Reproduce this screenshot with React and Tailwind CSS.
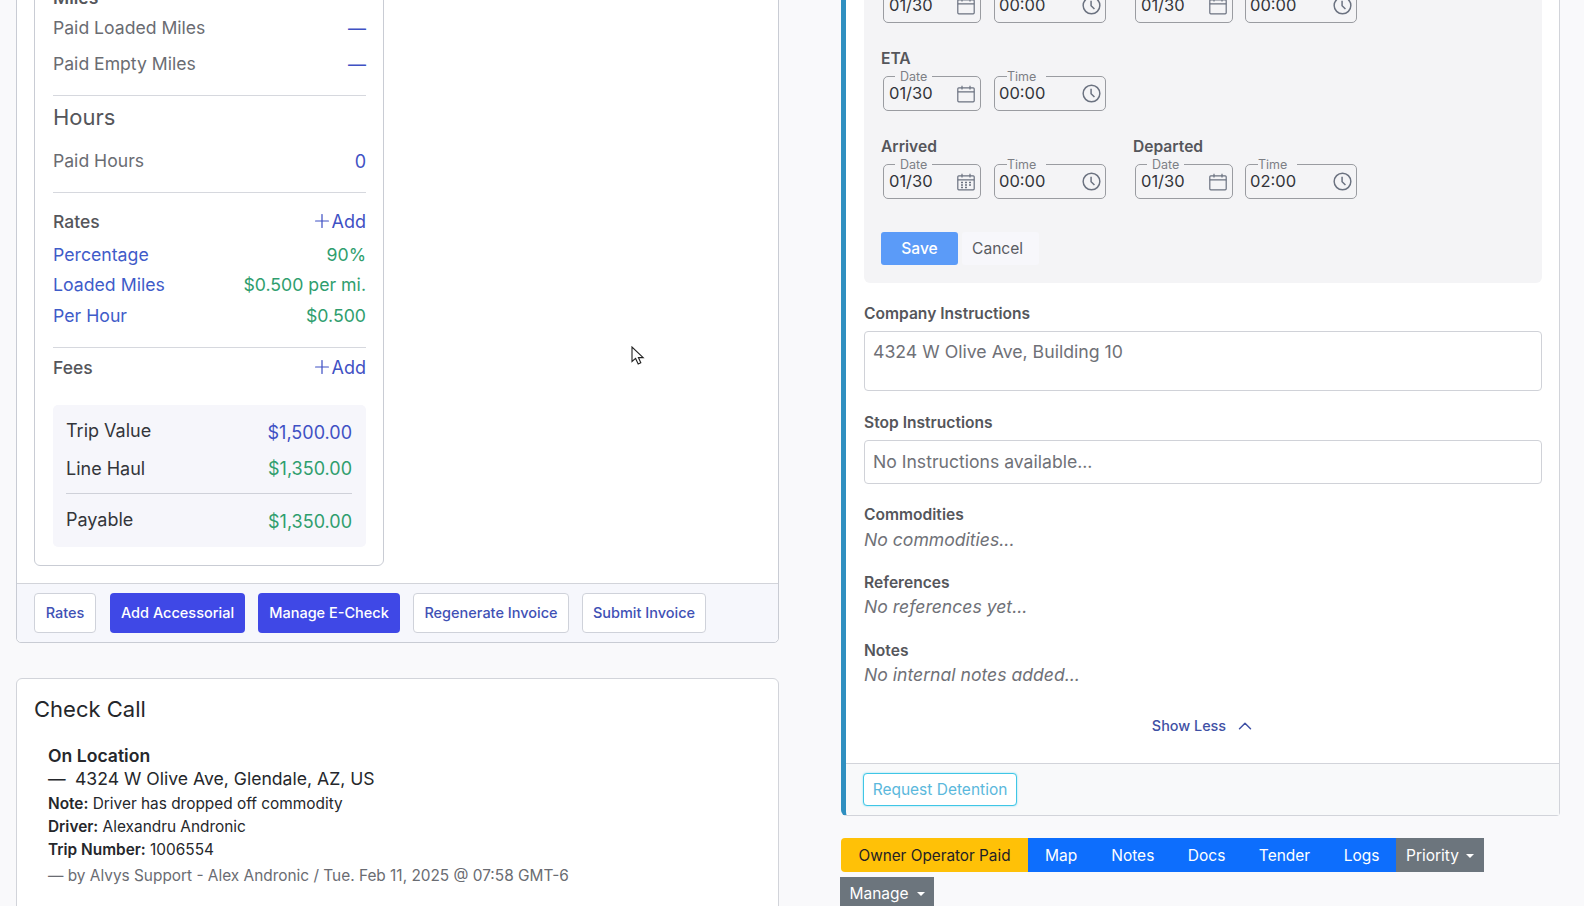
import React from 'react';
import { ChevronUp, Plus } from 'lucide-react';

const CalendarIcon = ({ dots }) => (
  <svg width="18" height="18" viewBox="0 0 18 18" fill="none" stroke="#6b7280" strokeWidth="1.2" className="shrink-0">
    <rect x="0.8" y="2.8" width="16.4" height="14" rx="1" />
    <path d="M0.8 6.8H17.2M5 0.8V4.4M13 0.8V4.4" />
    {dots && <path d="M4 9.5h2M8 9.5h2M12 9.5h2M4 12h2M8 12h2M12 12h2M4 14.5h2M8 14.5h2" strokeWidth="1.4" />}
  </svg>
);

const ClockIcon = () => (
  <svg width="19" height="19" viewBox="0 0 18 18" fill="none" stroke="#6b7280" strokeWidth="1.4" className="shrink-0">
    <circle cx="9" cy="9" r="7.9" />
    <path d="M8.6 4.4V9.2L11.8 12.4" />
  </svg>
);

const DateField = ({ label, value, dots, time }) => (
  <div className={`relative flex items-center justify-between h-[35px] border border-[#9a9ca1] rounded-[5px] ${time ? 'w-[112px] pl-[4px] pr-[4px]' : 'w-[98px] pl-[5px] pr-[5px]'}`}>
    <span className={`absolute -top-[8px] bg-[#f4f4f6] text-[12.5px] leading-[16px] text-[#7d7f85] ${time ? 'left-[12px] pr-[10px]' : 'left-[11px] px-[5px]'}`}>{label}</span>
    <span className="text-[16.5px] text-[#33353a]">{value}</span>
    {time ? <ClockIcon /> : <CalendarIcon dots={dots} />}
  </div>
);

const Stop = ({ title, date, time, dots, gap }) => (
  <div>
    {title && <div className="text-[15.6px] font-semibold leading-[18px] text-[#55565b] -ml-[2px] mb-[1px]">{title}</div>}
    <div className={`flex ${title ? 'mt-[8px]' : 'mt-[3px]'} ${gap ? 'gap-[12px]' : 'gap-[13px]'}`}>
      <DateField label="Date" value={date} dots={dots} />
      <DateField label="Time" value={time} time />
    </div>
  </div>
);

const Row = ({ label, value, labelClass, valueClass, className }) => (
  <div className={`flex items-center justify-between ${className}`}>
    <span className={labelClass}>{label}</span>
    <span className={valueClass}>{value}</span>
  </div>
);

const AddLink = () => (
  <span className="flex items-center text-[18px] text-[#3f51c4] -mt-[2px]">
    <Plus size={22} strokeWidth={1.35} className="-mr-[1px]" />
    Add
  </span>
);

const OutlineButton = ({ children, className }) => (
  <button className={`h-[40px] bg-white border border-[#cfd2da] rounded-[4px] text-[14.5px] font-medium text-[#3f51b5] ${className}`}>{children}</button>
);

const SolidButton = ({ children, className }) => (
  <button className={`h-[40px] bg-[#3f48e6] rounded-[4px] text-[14.5px] font-medium text-white ${className}`}>{children}</button>
);

const Cursor = () => (
  <svg width="14" height="20" viewBox="0 0 14 20" fill="white" stroke="#222" strokeWidth="1.1" className="absolute left-[631px] top-[346px]">
    <path d="M1 1V15.5L4.6 12.4L7.2 18L9.8 16.8L7.4 11.6H12.2Z" />
  </svg>
);

const sectionLabel = 'text-[15.6px] font-semibold leading-[18px] text-[#55565b]';
const emptyText = 'text-[17.6px] italic leading-[24px] text-[#6f7177]';

export default function App() {
  return (
    <div className="relative h-[906px] overflow-hidden bg-[#f9f9fb] flex font-['Inter',sans-serif]">
      {/* left column */}
      <div className="ml-[16px] w-[763px] shrink-0 -mt-[14px]">
        <div className="bg-white border border-[#c9ccd4] rounded-b-[5px] rounded-t-none">
          <div className="pl-[17px]">
            <div className="w-[350px] border border-[#c9ccd4] rounded-[6px] pl-[18px] pr-[17px] pt-[5px] pb-[18px]">
              <div className="h-[10px] text-[17.5px] font-semibold leading-[10px] text-[#55565b]">Miles</div>
              <Row className="mt-[7px] h-[36px]" label="Paid Loaded Miles" value="—" labelClass="text-[17.6px] text-[#6a6c72]" valueClass="text-[18px] text-[#3f51c4]" />
              <Row className="h-[36px]" label="Paid Empty Miles" value="—" labelClass="text-[17.6px] text-[#6a6c72]" valueClass="text-[18px] text-[#3f51c4]" />
              <div className="mt-[13px] border-t border-[#d6d8de]" />
              <div className="mt-[6px] text-[22px] leading-[30px] text-[#55565b]">Hours</div>
              <Row className="mt-[15px] h-[28px]" label="Paid Hours" value="0" labelClass="text-[17.6px] text-[#6a6c72]" valueClass="text-[18px] text-[#3f51c4]" />
              <div className="mt-[17px] border-t border-[#d6d8de]" />
              <Row className="mt-[15px] h-[28px]" label="Rates" value={<AddLink />} labelClass="text-[17.5px] font-medium text-[#55565b]" />
              <Row className="mt-[4px] h-[30px]" label="Percentage" value="90%" labelClass="text-[17.7px] text-[#3f5cc9]" valueClass="text-[17.7px] text-[#2f9e6e]" />
              <Row className="h-[30px]" label="Loaded Miles" value="$0.500 per mi." labelClass="text-[17.7px] text-[#3f5cc9]" valueClass="text-[17.7px] text-[#2f9e6e]" />
              <Row className="mt-[1px] h-[30px]" label="Per Hour" value="$0.500" labelClass="text-[17.7px] text-[#3f5cc9]" valueClass="text-[17.7px] text-[#2f9e6e]" />
              <div className="mt-[16px] border-t border-[#d6d8de]" />
              <Row className="mt-[6px] h-[28px]" label="Fees" value={<AddLink />} labelClass="text-[17.5px] font-medium text-[#55565b]" />
              <div className="mt-[23px] h-[142px] bg-[#f6f6fb] rounded-[5px] pl-[13px] pr-[14px] pt-[13px]">
                <Row className="h-[28px]" label="Trip Value" value="$1,500.00" labelClass="-mt-[3px] text-[18px] text-[#33353a]" valueClass="text-[18px] text-[#3f51c4]" />
                <Row className="mt-[8px] h-[28px]" label="Line Haul" value="$1,350.00" labelClass="text-[18px] text-[#33353a]" valueClass="text-[18px] text-[#2f9e6e]" />
                <div className="mt-[11px] border-t border-[#cfd1d9]" />
                <Row className="mt-[13px] h-[28px]" label="Payable" value="$1,350.00" labelClass="-mt-[3px] text-[18px] text-[#33353a]" valueClass="text-[18px] text-[#2f9e6e]" />
              </div>
            </div>
          </div>
          <div className="mt-[17px] h-[59px] border-t border-[#d2d4da] bg-[#f6f7fc] rounded-b-[5px] flex items-center pl-[17px]">
            <OutlineButton className="w-[62px]">Rates</OutlineButton>
            <SolidButton className="ml-[14px] w-[135px]">Add Accessorial</SolidButton>
            <SolidButton className="ml-[13px] w-[142px]">Manage E-Check</SolidButton>
            <OutlineButton className="ml-[13px] w-[156px]">Regenerate Invoice</OutlineButton>
            <OutlineButton className="ml-[13px] w-[124px]">Submit Invoice</OutlineButton>
          </div>
        </div>

        <div className="mt-[35px] h-[400px] bg-white border border-[#d2d4da] rounded-[6px] px-[17px] pt-[14px]">
          <h2 className="text-[22px] leading-[32px] text-[#25272b]">Check Call</h2>
          <div className="mt-[19px] pl-[14px] text-[#25272b]">
            <div className="text-[17.6px] font-semibold leading-[24px]">On Location</div>
            <div className="-mt-[1px] text-[17.6px] leading-[23px] flex"><span className="w-[27px]">—</span>4324 W Olive Ave, Glendale, AZ, US</div>
            <div className="mt-[2px] text-[15.4px] leading-[23px]"><b className="font-semibold">Note:</b> Driver has dropped off commodity</div>
            <div className="text-[15.4px] leading-[23px]"><b className="font-semibold">Driver:</b> Alexandru Andronic</div>
            <div className="text-[15.4px] leading-[23px]"><b className="font-semibold">Trip Number:</b> 1006554</div>
            <div className="mt-[3px] text-[15.4px] leading-[24px] text-[#6a6c72]">— by Alvys Support - Alex Andronic / Tue. Feb 11, 2025 @ 07:58 GMT-6</div>
          </div>
        </div>
      </div>

      {/* right column */}
      <div className="ml-[62px] w-[719px] shrink-0 -mt-[16px]">
        <div className="bg-white border border-[#d2d4da] border-l-[5px] border-l-[#2f8fc0] rounded-bl-[6px] rounded-br-[4px]">
          <div className="pl-[18px] pr-[17px]">
            <div className="bg-[#f4f4f6] rounded-b-[6px] pl-[17px] pt-0 pb-[18px]">
              <div className="flex">
                <div className="pl-[2px] w-[254px]"><Stop date="01/30" time="00:00" /></div>
                <div><Stop date="01/30" time="00:00" gap /></div>
              </div>
              <div className="mt-[27px] pl-[2px]"><Stop title="ETA" date="01/30" time="00:00" /></div>
              <div className="mt-[27px] flex">
                <div className="pl-[2px] w-[254px]"><Stop title="Arrived" date="01/30" time="00:00" dots /></div>
                <div><Stop title="Departed" date="01/30" time="02:00" gap /></div>
              </div>
              <div className="mt-[33px] flex gap-[4px]">
                <button className="w-[77px] h-[33px] bg-[#5b9bf8] rounded-[3px] text-[15.6px] font-medium text-white">Save</button>
                <button className="w-[77px] h-[33px] bg-[#f7f7fb] rounded-[3px] pl-[10px] text-left text-[15.6px] text-[#5a5c62]">Cancel</button>
              </div>
            </div>

            <div className={`mt-[22px] ${sectionLabel}`}>Company Instructions</div>
            <div className="mt-[8px] h-[60px] border border-[#d0d2d8] rounded-[4px] pl-[8px] pt-[9px] text-[17.7px] leading-[22px] text-[#6f7177]">4324 W Olive Ave, Building 10</div>

            <div className={`mt-[23px] ${sectionLabel}`}>Stop Instructions</div>
            <div className="mt-[8px] h-[44px] border border-[#d0d2d8] rounded-[4px] px-[8px] flex items-center text-[17.6px] text-[#6f7177]">No Instructions available...</div>

            <div className={`mt-[22px] ${sectionLabel}`}>Commodities</div>
            <div className={`mt-[4px] ${emptyText}`}>No commodities...</div>

            <div className={`mt-[22px] ${sectionLabel}`}>References</div>
            <div className={`mt-[3px] ${emptyText}`}>No references yet...</div>

            <div className={`mt-[23px] ${sectionLabel}`}>Notes</div>
            <div className={`mt-[3px] ${emptyText}`}>No internal notes added...</div>

            <div className="mt-[28px] pl-[2px] flex items-center justify-center gap-[8px] text-[14.4px] font-medium text-[#3f51a5] leading-[20px]">
              Show Less <ChevronUp size={22} strokeWidth={1.6} />
            </div>
          </div>
          <div className="mt-[26px] h-[52px] border-t border-[#d2d4da] bg-[#f8f9fa] rounded-bl-[6px] flex items-center pl-[17px]">
            <button className="w-[154px] h-[33px] bg-white border border-[#3fc6e6] rounded-[4px] shadow-[0_0_2px_#7fdcf2] text-[15.5px] text-[#5bb8dc]">Request Detention</button>
          </div>
        </div>

        <div className="mt-[22px] flex text-[15.5px]">
          <div className="h-[34px] w-[187px] pt-[2px] bg-[#ffc107] rounded-l-[4px] flex items-center justify-center text-[15.3px] text-[#1f2126]">Owner Operator Paid</div>
          <div className="h-[34px] w-[368px] pt-[2px] bg-[#0d6efd] flex items-center text-white">
            <span className="ml-[17px]">Map</span>
            <span className="ml-[34px]">Notes</span>
            <span className="ml-[33.5px]">Docs</span>
            <span className="ml-[33.5px]">Tender</span>
            <span className="ml-[33.5px]">Logs</span>
          </div>
          <div className="h-[34px] w-[88px] pt-[2px] bg-[#6c757d] flex items-center justify-center gap-[7px] text-white">
            Priority <span className="border-x-[4px] border-x-transparent border-t-[4px] border-t-white" />
          </div>
        </div>
        <div className="mt-[5px] -ml-[1px] h-[34px] w-[94px] bg-[#6c757d] flex items-center justify-center gap-[8px] text-[15.5px] text-white">
          Manage <span className="border-x-[4px] border-x-transparent border-t-[4px] border-t-white" />
        </div>
      </div>

      <Cursor />
    </div>
  );
}
